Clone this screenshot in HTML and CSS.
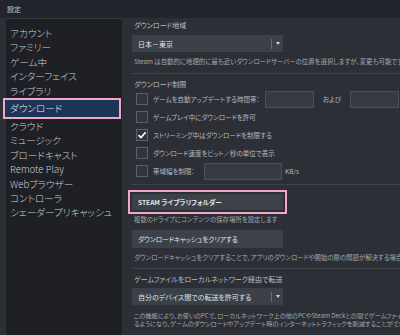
FILE: index.html
```html
<!DOCTYPE html>
<html lang="ja">
<head>
  <meta charset="UTF-8">
  <title>設定</title>
  <link rel="stylesheet" href="styles.css">
</head>
<body>
  <div class="titlebar">設定</div>
  <div class="main">
    <nav class="sidebar">
      <div class="nav-item">アカウント</div>
      <div class="nav-item">ファミリー</div>
      <div class="nav-item">ゲーム中</div>
      <div class="nav-item">インターフェイス</div>
      <div class="nav-item">ライブラリ</div>
      <div class="nav-item selected">ダウンロード</div>
      <div class="nav-item">クラウド</div>
      <div class="nav-item">ミュージック</div>
      <div class="nav-item">ブロードキャスト</div>
      <div class="nav-item">Remote Play</div>
      <div class="nav-item">Webブラウザー</div>
      <div class="nav-item">コントローラ</div>
      <div class="nav-item">シェーダープリキャッシュ</div>
    </nav>
    <div class="content">
      <div class="label first">ダウンロード地域</div>
      <div class="dropdown"><span class="dropdown-text">日本－東京</span><span class="arrow"></span></div>
      <div class="desc">Steam は自動的に地理的に最も近いダウンロードサーバーの位置を選択しますが、変更も可能です。</div>
      <div class="divider"></div>

      <div class="label">ダウンロード制限</div>
      <div class="row">
        <span class="check"></span>
        <span class="row-text wide">ゲームを自動アップデートする時間帯：</span>
        <span class="field time"></span>
        <span class="and">および</span>
        <span class="field time"></span>
      </div>
      <div class="row">
        <span class="check"></span>
        <span class="row-text">ゲームプレイ中にダウンロードを許可</span>
      </div>
      <div class="row">
        <span class="check checked">
          <svg width="10" height="10" viewBox="0 0 10 10"><path d="M1.5 5.2 L4 7.6 L8.6 2.2" fill="none" stroke="#ffffff" stroke-width="1.7"/></svg>
        </span>
        <span class="row-text">ストリーミング中はダウンロードを制限する</span>
      </div>
      <div class="row">
        <span class="check"></span>
        <span class="row-text">ダウンロード速度をビット／秒の単位で表示</span>
      </div>
      <div class="row">
        <span class="check"></span>
        <span class="row-text short">帯域幅を制限：</span>
        <span class="field rate"></span>
        <span class="unit">KB/s</span>
      </div>
      <div class="divider near"></div>

      <div class="marked">
        <div class="button strong">STEAM ライブラリフォルダー</div>
      </div>
      <div class="desc tight">複数のドライブにコンテンツの保存場所を設定します</div>
      <div class="button spaced">ダウンロードキャッシュをクリアする</div>
      <div class="desc">ダウンロードキャッシュをクリアすることで、アプリのダウンロードや開始の際の問題が解決する場合があります</div>
      <div class="divider small"></div>

      <div class="label">ゲームファイルをローカルネットワーク経由で転送</div>
      <div class="dropdown lower"><span class="dropdown-text">自分のデバイス間での転送を許可する</span><span class="arrow"></span></div>
      <div class="note">
        この機能により、お使いのPCで、ローカルネットワーク上の他のPCやSteam Deckとの間でゲームファイルを転送でき<br>
        るようになり、ゲームのダウンロードやアップデート時のインターネットトラフィックを削減することができます。
      </div>
    </div>
  </div>
</body>
</html>
```

FILE: styles.css
```css
body
{
  margin:0;
  width:400px;
  height:335px;
  overflow:hidden;
  background-color:#2c2f36;
  font-family:"Noto Sans CJK JP","Noto Sans",sans-serif;
  font-feature-settings:"palt";
}
.titlebar
{
  height:18px;
  line-height:18px;
  padding-left:7px;
  font-size:7px;
  color:#c4c8ce;
  background-color:#22252b;
}
.main
{
  display:flex;
  height:317px;
}
.sidebar
{
  flex:none;
  width:116px;
  margin-left:6px;
  padding-top:7px;
  border-top:1px solid #3a3d44;
  background-color:#1e2025;
}
.nav-item
{
  padding-left:4px;
  font-size:9.6px;
  font-weight:300;
  line-height:14.4px;
  color:#c9cdd3;
  white-space:nowrap;
}
.nav-item.selected
{
  margin:0 1px 0 -3px;
  padding-left:5px;
  line-height:17px;
  border:2px solid #f3a6c8;
  background-color:#1b3556;
  color:#e6e9ed;
}
.content
{
  flex:1;
  min-width:0;
  padding:1px 0 0 10px;
  overflow:hidden;
  white-space:nowrap;
}
.label
{
  margin-top:4px;
  padding-left:2px;
  font-size:7px;
  line-height:12px;
  color:#b8bcc3;
}
.label.first
{
  margin-top:0;
}
.dropdown
{
  display:flex;
  align-items:center;
  width:151px;
  height:17px;
  margin-top:4px;
  padding-left:6px;
  box-sizing:border-box;
  background-color:#3c4048;
  font-size:7px;
  color:#dfe1e4;
}
.dropdown.lower
{
  margin-top:3px;
}
.dropdown-text
{
  flex:1;
}
.arrow
{
  display:flex;
  align-items:center;
  justify-content:center;
  width:11px;
  height:10px;
  border-left:1px solid #686d76;
}
.arrow::after
{
  content:"";
  border-top:3px solid #d3d6da;
  border-left:2.5px solid transparent;
  border-right:2.5px solid transparent;
}
.desc
{
  margin-top:4px;
  padding-left:2px;
  font-size:6.4px;
  line-height:12px;
  color:#a2a7ae;
}
.desc.tight
{
  margin-top:0;
}
.divider
{
  height:1px;
  margin-top:5px;
  background-color:#3f434b;
}
.divider.near
{
  margin-top:4px;
}
.divider.small
{
  margin-top:4px;
}
.row
{
  display:flex;
  align-items:center;
  height:18px;
  padding-left:4px;
  font-size:6.5px;
  color:#b5bac1;
}
.row:first-of-type
{
  margin-top:2px;
}
.check
{
  display:flex;
  align-items:center;
  justify-content:center;
  flex:none;
  width:12px;
  height:12px;
  margin-right:5px;
  box-sizing:border-box;
  border:1px solid #5b6069;
  background-color:#30343b;
}
.row-text.wide
{
  width:112px;
}
.row-text.short
{
  width:51px;
}
.field
{
  flex:none;
  height:17px;
  box-sizing:border-box;
  border:1px solid #4b5058;
  background-color:#363a41;
}
.field.time
{
  width:49px;
}
.field.rate
{
  width:78px;
}
.and
{
  width:36px;
  text-align:center;
}
.unit
{
  margin-left:3px;
}
.marked
{
  width:151px;
  margin:5px 0 0 -4px;
  padding:2px;
  border:2px solid #f3a6c8;
}
.button
{
  width:151px;
  height:16px;
  line-height:16px;
  padding-left:6px;
  box-sizing:border-box;
  background-color:#3d424a;
  font-size:6.6px;
  color:#e3e5e8;
}
.button.strong
{
  font-weight:bold;
}
.button.spaced
{
  height:18px;
  line-height:18px;
  margin-top:4px;
}
.note
{
  margin-top:7px;
  padding-left:2px;
  font-size:6.2px;
  line-height:8px;
  color:#a2a7ae;
}
```
